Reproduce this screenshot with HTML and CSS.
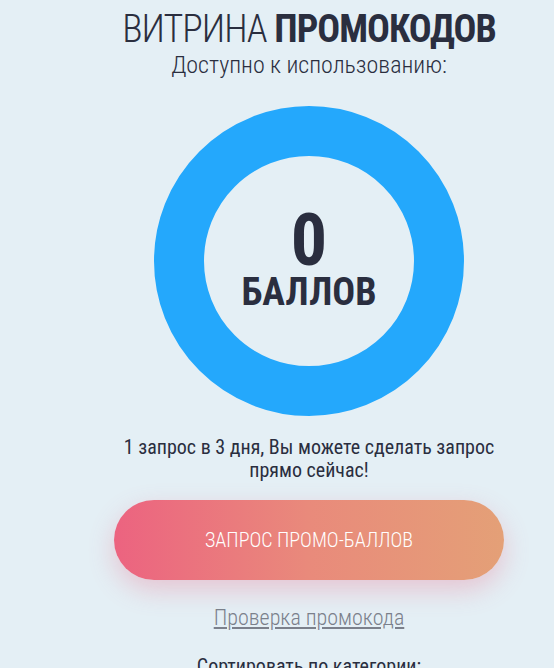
FILE: index.html
```html
<!DOCTYPE html>
<html lang="ru">
<head>
<meta charset="utf-8">
<title>Витрина промокодов</title>
<link rel="stylesheet" href="styles.css">
</head>
<body>
<main class="page">
  <section class="showcase">
    <h1 class="title">ВИТРИНА <b>ПРОМОКОДОВ</b></h1>
    <p class="subtitle">Доступно к использованию:</p>
    <div class="balance">
      <span class="balance-value">0</span>
      <span class="balance-unit">БАЛЛОВ</span>
    </div>
    <p class="note">1 запрос в 3 дня, Вы можете сделать запрос прямо сейчас!</p>
    <button class="request-btn" type="button">ЗАПРОС ПРОМО-БАЛЛОВ</button>
    <a class="check-link" href="#">Проверка промокода</a>
    <p class="sort-label">Сортировать по категории:</p>
  </section>
</main>
</body>
</html>
```

FILE: styles.css
```css
html, body {
  margin: 0;
  padding: 0;
}

body {
  background: #e4eff5;
  color: #2a2e3f;
  font-family: "Roboto Condensed", Roboto, "Liberation Sans", sans-serif;
  overflow: hidden;
}

.page {
  padding-left: 64px;
}

.showcase {
  display: flex;
  flex-direction: column;
  align-items: center;
  text-align: center;
}

.title {
  margin: 7px 0 0;
  font-size: 38px;
  line-height: 44px;
  font-weight: 300;
  letter-spacing: -1px;
  white-space: nowrap;
}

.title b {
  font-weight: 700;
}

.subtitle {
  margin: 0;
  font-size: 24px;
  line-height: 28px;
  font-weight: 300;
}

.balance {
  box-sizing: border-box;
  width: 310px;
  height: 310px;
  margin-top: 27px;
  border: 50px solid #24a8fc;
  border-radius: 50%;
  display: flex;
  flex-direction: column;
  align-items: center;
  justify-content: center;
}

.balance-value {
  font-size: 72px;
  line-height: 62px;
  font-weight: 700;
}

.balance-unit {
  font-size: 38px;
  line-height: 40px;
  font-weight: 700;
}

.note {
  margin: 20px 0 0;
  width: 400px;
  font-size: 20px;
  line-height: 23px;
  font-weight: 400;
}

.request-btn {
  margin-top: 18px;
  width: 390px;
  height: 80px;
  border: 0;
  border-radius: 40px;
  background: linear-gradient(90deg, #ec6380 0%, #e98a7b 50%, #e4a077 100%);
  box-shadow: 0 10px 26px rgba(236, 99, 128, 0.3);
  color: #ffffff;
  font-family: inherit;
  font-size: 20px;
  font-weight: 300;
  cursor: pointer;
}

.check-link {
  margin-top: 25px;
  color: #7b808b;
  font-size: 22px;
  line-height: 26px;
  font-weight: 300;
  text-decoration: underline;
}

.sort-label {
  margin: 23px 0 0;
  font-size: 20px;
  line-height: 24px;
  font-weight: 400;
}
```
